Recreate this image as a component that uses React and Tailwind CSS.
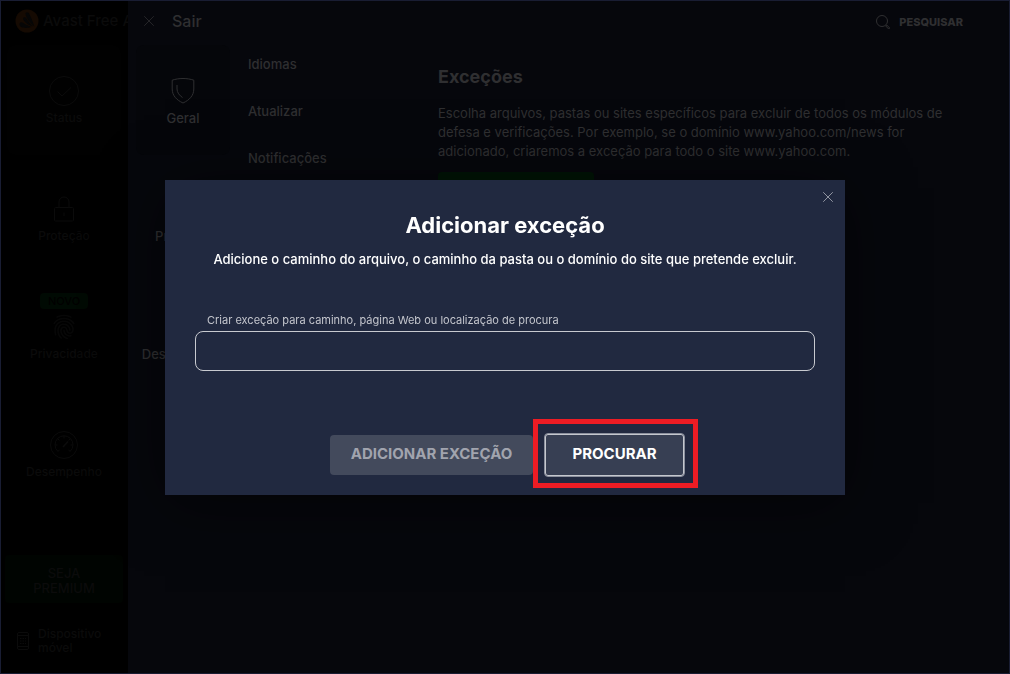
import { useState } from "react";
import { X } from "lucide-react";
import { IoFingerPrint } from "react-icons/io5";

const StatusIcon = () => (
  <svg width="32" height="32" viewBox="0 0 32 32" fill="none" stroke="currentColor" strokeWidth="1">
    <circle cx="16" cy="16" r="14.5" />
    <path d="M9.500 16.500l4.500 4.500 9-8.500" />
  </svg>
);

const LockIcon = () => (
  <svg width="22" height="28" viewBox="0 0 22 28" fill="none" stroke="currentColor" strokeWidth="1">
    <rect x="1.5" y="12.5" width="19" height="13.5" rx="1" />
    <path d="M6 12.500V7a5 5 0 0 1 10 0v5.500M11 17.500v3.500" />
  </svg>
);

const GaugeIcon = () => (
  <svg width="30" height="30" viewBox="0 0 30 30" fill="none" stroke="currentColor" strokeWidth="1">
    <circle cx="15" cy="15" r="13.5" />
    <path d="M9 21.500a9 9 0 1 1 12 0" />
    <path d="M15 6v2.500M8.600 8.600l1.800 1.800M21.400 8.600l-1.800 1.800M6 15h2.500M24 15h-2.500M9 21.500l1.500-1.800M21 21.500l-1.500-1.800" />
    <path d="M14 17l5-5.500" strokeWidth="1.500" />
  </svg>
);

const ShieldIcon = () => (
  <svg width="24" height="28" viewBox="0 0 24 28" fill="none" stroke="currentColor" strokeWidth="1">
    <path d="M12 1.500c4 0 7.500.6 10.800 1.700V12c0 6.500-4.300 11-10.800 14C5.500 23 1.200 18.500 1.200 12V3.200C4.500 2.100 8 1.500 12 1.500z" />
    <path d="M6 8v4c0 3.500 2.500 6.500 5.500 8.500" />
  </svg>
);

const PhoneIcon = () => (
  <svg width="14" height="20" viewBox="0 0 14 20" fill="none" stroke="currentColor" strokeWidth="1">
    <rect x="1.500" y="1.500" width="11" height="17" rx="1.500" />
    <path d="M1.500 4.500h11M1.500 15.500h11" />
    <path d="M4 7.500h6M4 10h6M4 12.500h6" strokeDasharray="1.500 1" />
  </svg>
);

const SearchIcon = () => (
  <svg width="16" height="16" viewBox="0 0 16 16" fill="none" stroke="currentColor" strokeWidth="1">
    <circle cx="7" cy="7" r="5.500" />
    <path d="M10.700 12l1-1 3 3-1 1z" />
  </svg>
);

const AvastLogo = () => (
  <svg width="24" height="24" viewBox="0 0 24 24">
    <circle cx="12" cy="12" r="11.500" fill="#150a02" />
    <path
      d="M10.500 5c-.2-1.800 2.200-2.600 3.300-1 2 3.500 4 8.500 5.500 13.500C15.500 14.500 11 9 10.500 5z"
      fill="#060606"
    />
    <path
      d="M8 9.500c.5-1.500 2.500-1.500 3.300-.2 1.500 2.700 3.700 5.200 6.700 8.200-4-1-9.500-4.500-10-8z"
      fill="#060606"
    />
    <path d="M4.500 15c.3-1.800 2-2.300 3.500-1.300 2.500 1.600 5 2.800 8.500 4.300-4 1.500-12.500 1.500-12-3z" fill="#060606" />
  </svg>
);

const sidebarItems = [
  { label: "Status", icon: <StatusIcon />, active: true },
  { label: "Proteção", icon: <LockIcon /> },
  { label: "Privacidade", icon: <IoFingerPrint size={26} className="opacity-70" />, badge: "NOVO" },
  { label: "Desempenho", icon: <GaugeIcon /> },
];

const categories = [
  { label: "Geral", icon: <ShieldIcon />, active: true },
  { label: "Proteção", icon: <LockIcon /> },
  { label: "Desempenho", icon: <GaugeIcon /> },
];

const sections = ["Idiomas", "Atualizar", "Notificações"];

// Icon above label, shared by the sidebar and the settings categories
function NavTile({ label, icon, active, badge, activeClass }) {
  return (
    <a
      href="#"
      className={`relative flex h-[110px] flex-col items-center gap-0.5 rounded-lg pt-[31px] ${active ? activeClass : ""}`}
    >
      {badge && (
        <span className="absolute top-3 rounded bg-[#000a03] px-2 text-[11px] leading-4 font-medium text-black">
          {badge}
        </span>
      )}
      <span className="flex h-[30px] items-center">{icon}</span>
      <span className="leading-5 font-medium">{label}</span>
    </a>
  );
}

function Sidebar() {
  return (
    <aside className="flex w-[127px] shrink-0 flex-col bg-black text-[#0b0b0b]">
      <div className="flex h-10 items-center gap-1 overflow-hidden pl-3.5 whitespace-nowrap">
        <span className="shrink-0">
          <AvastLogo />
        </span>
        <span className="text-[15px] font-medium">Avast Free A</span>
      </div>
      <nav className="mt-1 flex flex-col gap-2 pr-[7px] pl-1.5 text-xs">
        {sidebarItems.map((item) => (
          <NavTile key={item.label} {...item} activeClass="bg-[#010101]" />
        ))}
      </nav>
      <div className="mt-auto flex flex-col pr-[5px] pb-[18px] pl-1">
        <button className="h-12 rounded bg-[#000401] px-6 pt-1 text-[13px] leading-[15px] font-medium">
          SEJA PREMIUM
        </button>
        <a href="#" className="mt-6 flex items-center gap-2 pl-[11px] text-xs leading-[14px] font-medium">
          <PhoneIcon />
          <span className="w-20">Dispositivo móvel</span>
        </a>
      </div>
    </aside>
  );
}

function Settings() {
  return (
    <div className="flex min-w-0 flex-1 flex-col bg-[#06070c] text-[#2f2f31]">
      <header className="flex h-10 items-center justify-between pr-[46px] pl-3">
        <button className="flex items-center gap-3.5 text-base leading-5 font-medium">
          <X size={18} strokeWidth={1} />
          Sair
        </button>
        <button className="flex items-center gap-2 pt-0.5 text-[11px] leading-5 font-extrabold">
          <SearchIcon />
          PESQUISAR
        </button>
      </header>
      <div className="mt-1 flex flex-1">
        <nav className="flex w-[110px] shrink-0 flex-col gap-2 px-2 text-[13px]">
          {categories.map((item) => (
            <NavTile key={item.label} {...item} activeClass="bg-[#05060a]" />
          ))}
        </nav>
        <ul className="flex w-[200px] shrink-0 flex-col gap-[27px] pt-[9px] pl-2.5 text-[13px] leading-5 font-medium">
          {sections.map((section) => (
            <li key={section}>
              <a href="#">{section}</a>
            </li>
          ))}
        </ul>
        <main className="min-w-0 flex-1 pt-5 pr-12">
          <h1 className="text-lg leading-6 font-bold">Exceções</h1>
          <p className="mt-[15px] max-w-[520px] text-[13px] leading-[19px]">
            Escolha arquivos, pastas ou sites específicos para excluir de todos os módulos de defesa e
            verificações. Por exemplo, se o domínio www.yahoo.com/news for adicionado, criaremos a exceção
            para todo o site www.yahoo.com.
          </p>
          <button aria-label="Adicionar exceção" className="mt-[11px] h-10 w-[156px] rounded-sm bg-[#001406]" />
        </main>
      </div>
    </div>
  );
}

function AddExceptionDialog() {
  const [path, setPath] = useState("");

  return (
    <div className="fixed inset-0 flex items-center justify-center">
      <div
        role="dialog"
        aria-labelledby="dialog-title"
        className="relative flex w-[680px] flex-col bg-[#212940] px-[30px] pt-[29px] pb-[18px] text-white shadow-[0_8px_60px_rgba(0,0,0,0.5)]"
      >
        <button aria-label="Fechar" className="absolute top-2 right-2 text-[#b5b8c2]">
          <X size={18} strokeWidth={1} />
        </button>
        <h2 id="dialog-title" className="text-center text-[22px] leading-8 font-bold">
          Adicionar exceção
        </h2>
        <p className="mt-2 text-center text-[13px] leading-5 font-medium whitespace-nowrap">
          Adicione o caminho do arquivo, o caminho da pasta ou o domínio do site que pretende excluir.
        </p>
        <label htmlFor="path" className="mt-[41px] mb-px pl-3 text-[11px] leading-5 text-[#c4c6cd]">
          Criar exceção para caminho, página Web ou localização de procura
        </label>
        <input
          id="path"
          type="text"
          value={path}
          onChange={(e) => setPath(e.target.value)}
          className="h-10 rounded-lg border border-[#c8cad0] px-3 text-sm outline-none"
        />
        <div className="mt-[62px] flex items-center justify-center gap-[11px] pl-[5px]">
          <button
            disabled={!path}
            className="h-10 w-[203px] rounded-sm bg-[#434a5c] text-[15px] font-bold text-[#a1a4ae]"
          >
            ADICIONAR EXCEÇÃO
          </button>
          <div className="relative">
            <button className="block h-11 w-[141px] rounded border border-[#8b909d] bg-[#373f53] text-[15px] font-bold inset-ring inset-ring-[#c4c7ce]">
              PROCURAR
            </button>
            <span className="pointer-events-none absolute -top-3.5 -right-[13px] -bottom-[11px] -left-[11px] border-[5px] border-[#ed1c24]" />
          </div>
        </div>
      </div>
    </div>
  );
}

export default function App() {
  return (
    <div className="flex min-h-screen overflow-hidden border border-[#191d33] bg-black font-['Inter',sans-serif]">
      <Sidebar />
      <Settings />
      <AddExceptionDialog />
    </div>
  );
}
